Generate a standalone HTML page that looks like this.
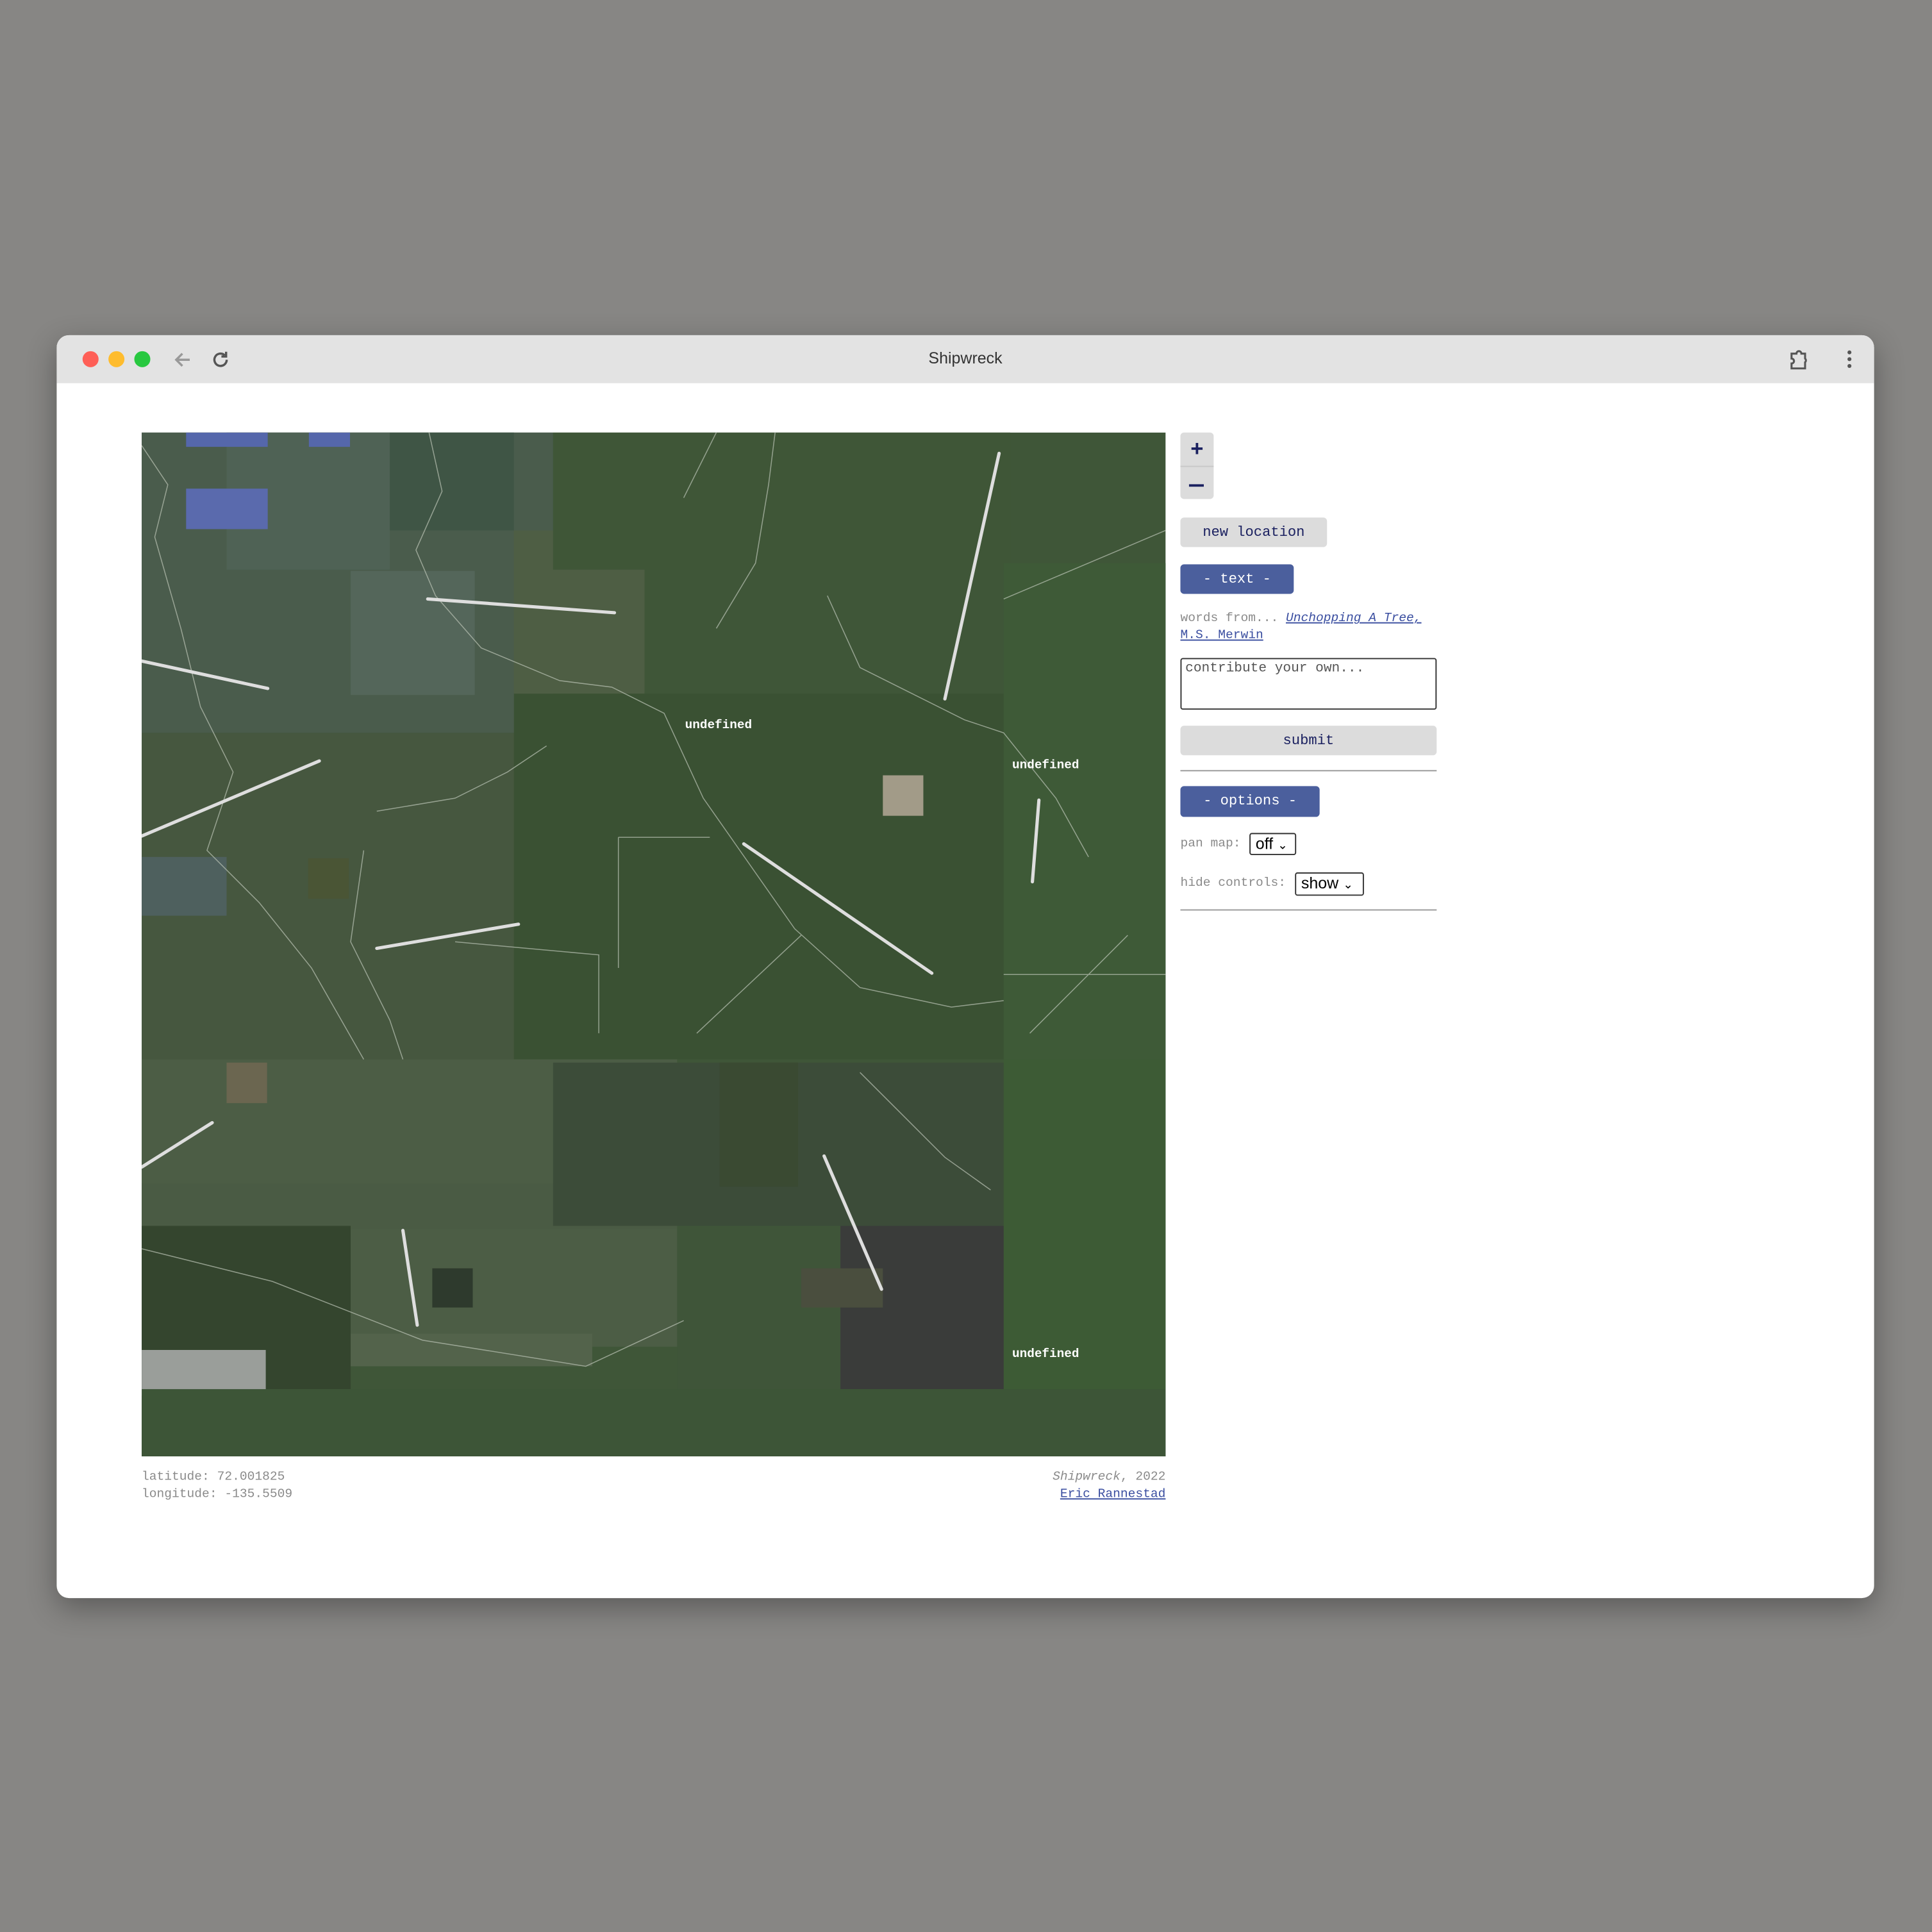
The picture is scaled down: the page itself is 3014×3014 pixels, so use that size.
<!DOCTYPE html>
<html><head><meta charset="utf-8"><style>
html,body{margin:0;padding:0;}
body{width:3014px;height:3014px;background:#878684;overflow:hidden;position:relative;}
#w{position:absolute;left:0;top:0;width:1568px;height:1568px;transform:scale(1.92219);transform-origin:0 0;font-family:"Liberation Mono",monospace;}
.win{position:absolute;left:46px;top:272px;width:1475px;height:1025px;background:#fff;border-radius:10px;overflow:hidden;box-shadow:0 8px 24px rgba(0,0,0,.32);}
.bar{position:absolute;left:0;top:0;width:100%;height:39px;background:#e3e3e3;}
.dot{position:absolute;top:13px;width:13px;height:13px;border-radius:50%;}
.title{position:absolute;left:0;width:100%;top:11px;text-align:center;font:13px "Liberation Sans",sans-serif;color:#333;}
.abs{position:absolute;}
.btn{position:absolute;left:912px;background:#dcdcdc;border-radius:3px;color:#1b2160;font-size:11.5px;text-align:center;}
.blue{background:#4b5f9d;color:#fff;}
.gray{color:#8a8a8a;font-size:10.2px;}
a{color:#3a4ea0;}
.sel{position:absolute;border:1px solid #333;border-radius:2px;font:13px "Liberation Sans",sans-serif;color:#000;background:#fff;box-sizing:border-box;padding-left:4px;line-height:16px;}
</style></head><body><div id="w">
<div class="win">
 <div class="bar">
  <div class="dot" style="left:21px;background:#fe5f57;"></div>
  <div class="dot" style="left:42px;background:#febc2e;"></div>
  <div class="dot" style="left:63px;background:#28c840;"></div>
  <svg class="abs" style="left:94px;top:12px" width="16" height="16" viewBox="0 0 16 16"><path d="M14 8H3M8 3L3 8l5 5" stroke="#999" stroke-width="1.8" fill="none"/></svg>
  <svg class="abs" style="left:125px;top:12px" width="16" height="16" viewBox="0 0 16 16"><path d="M13 8a5 5 0 1 1-1.6-3.7" stroke="#555" stroke-width="1.8" fill="none"/><path d="M12.5 1.5v3.8H8.7" stroke="#555" stroke-width="1.8" fill="none"/></svg>
  <div class="title">Shipwreck</div>
  <svg class="abs" style="left:1405px;top:11px" width="18" height="18" viewBox="0 0 18 18"><path d="M3 4h4a2 2 0 0 1 4 0h3v4a2 2 0 0 1 0 3v5H3v-4a2 2 0 0 0 0-4z" stroke="#555" stroke-width="1.6" fill="none"/></svg>
  <svg class="abs" style="left:1450px;top:11px" width="10" height="18" viewBox="0 0 10 18"><circle cx="5" cy="3" r="1.6" fill="#555"/><circle cx="5" cy="8.5" r="1.6" fill="#555"/><circle cx="5" cy="14" r="1.6" fill="#555"/></svg>
 </div>
 <svg class="abs" style="left:69px;top:79px" width="831" height="831" viewBox="0 0 1568 1568">
  <rect width="1568" height="1568" fill="#3f5638"/>
  <rect x="0" y="0" width="630" height="460" fill="#4a5c4c"/>
  <rect x="130" y="0" width="250" height="210" fill="#4f6255"/>
  <rect x="320" y="212" width="190" height="190" fill="#54665a"/>
  <rect x="380" y="0" width="190" height="150" fill="#3f5545"/>
  <rect x="570" y="150" width="200" height="250" fill="#4e5e44"/>
  <rect x="630" y="0" width="700" height="210" fill="#3f5637"/>
  <rect x="0" y="460" width="570" height="500" fill="#46573f"/>
  <rect x="0" y="650" width="130" height="90" fill="#4e605e"/>
  <rect x="570" y="400" width="760" height="560" fill="#3a5133"/>
  <rect x="1320" y="200" width="248" height="760" fill="#3e5a37"/>
  <rect x="0" y="960" width="820" height="440" fill="#4c5d45"/>
  <rect x="0" y="1150" width="820" height="70" fill="#4a5b44"/>
  <rect x="630" y="965" width="690" height="250" fill="#3c4c39"/>
  <rect x="885" y="965" width="120" height="190" fill="#3a4a32"/>
  <rect x="1320" y="960" width="248" height="505" fill="#3d5b35"/>
  <rect x="820" y="1215" width="250" height="250" fill="#3f5539"/>
  <rect x="1070" y="1215" width="250" height="250" fill="#3a3c3a"/>
  <rect x="1010" y="1280" width="125" height="60" fill="#4a4e3e"/>
  <rect x="0" y="1215" width="320" height="353" fill="#34452e"/>
  <rect x="0" y="1405" width="190" height="70" fill="#9a9e9a"/>
  <rect x="0" y="1465" width="1568" height="103" fill="#3d5537"/>
  <rect x="320" y="1380" width="370" height="50" fill="#53634b"/>
  <rect x="1135" y="525" width="62" height="62" fill="#a29b88"/>
  <rect x="130" y="965" width="62" height="62" fill="#6b6650"/>
  <rect x="255" y="652" width="62" height="62" fill="#4a5535"/>
  <rect x="445" y="1280" width="62" height="60" fill="#2e3a2d"/>
  <rect x="68" y="0" width="125" height="22" fill="#5567ab"/>
  <rect x="256" y="0" width="63" height="22" fill="#5567ab"/>
  <rect x="68" y="86" width="125" height="62" fill="#5a6aad"/>
  <g stroke="#b9c2b4" stroke-width="1.5" fill="none" opacity=".7">
   <path d="M0 20 L40 80 L20 160 L60 300 L90 420 L140 520 L100 640 L180 720 L260 820 L340 960"/>
   <path d="M440 0 L460 90 L420 180 L450 250 L520 330 L640 380 L720 390 L800 430 L860 560 L930 660 L1000 760 L1100 850 L1240 880 L1320 870"/>
   <path d="M970 0 L960 80 L940 200 L880 300"/>
   <path d="M880 0 L830 100"/>
   <path d="M1050 250 L1100 360 L1180 400 L1260 440 L1320 460 L1400 560 L1450 650"/>
   <path d="M360 580 L480 560 L560 520 L620 480"/>
   <path d="M340 640 L320 780 L380 900 L400 960"/>
   <path d="M480 780 L700 800 L700 920"/>
   <path d="M730 620 L870 620 M730 620 L730 820"/>
   <path d="M850 920 L1010 770"/>
   <path d="M1360 920 L1510 770 M1320 830 L1568 830"/>
   <path d="M1100 980 L1230 1110 L1300 1160"/>
   <path d="M0 1250 L200 1300 L430 1390 L680 1430 L830 1360"/>
   <path d="M1320 255 L1568 150"/>
  </g>
  <g stroke="#dedede" stroke-width="5" stroke-linecap="round">
   <path d="M438 255 L724 276"/><path d="M1313 32 L1230 408"/><path d="M0 350 L193 392"/>
   <path d="M272 503 L0 618"/><path d="M360 790 L577 753"/><path d="M922 630 L1210 828"/>
   <path d="M1374 563 L1364 688"/><path d="M108 1057 L0 1125"/><path d="M400 1222 L422 1367"/>
   <path d="M1045 1108 L1133 1312"/>
  </g>
  <g fill="#fff" font-family="Liberation Mono, monospace" font-size="19" font-weight="bold">
   <text x="832" y="453">undefined</text><text x="1333" y="514">undefined</text><text x="1333" y="1416">undefined</text>
  </g>
 </svg>
 <div class="abs" style="left:912px;top:79px;width:27px;height:54px;background:#dcdcdc;border-radius:3px;"></div>
 <div class="abs" style="left:912px;top:106px;width:27px;height:1px;background:#c8c8c8;"></div>
 <div class="abs" style="left:912px;top:82px;width:27px;text-align:center;font:bold 18px 'Liberation Sans',sans-serif;color:#1b2160;">+</div>
 <div class="abs" style="left:919px;top:121px;width:12px;height:2px;background:#1b2160;"></div>
 <div class="btn" style="top:148px;width:119px;height:24px;line-height:25px;">new location</div>
 <div class="btn blue" style="top:186px;width:92px;height:24px;line-height:25px;">- text -</div>
 <div class="abs gray" style="left:912px;top:224px;line-height:14px;width:220px;">words from... <a href="#"><i>Unchopping A Tree,</i></a><br><a href="#">M.S. Merwin</a></div>
 <div class="abs" style="left:912px;top:262px;width:208px;height:42px;border:1px solid #333;border-radius:2px;font-size:11px;color:#555;padding:2px 3px;box-sizing:border-box;">contribute your own...</div>
 <div class="btn" style="top:317px;width:208px;height:24px;line-height:25px;">submit</div>
 <div class="abs" style="left:912px;top:353px;width:208px;height:1px;background:#999;"></div>
 <div class="btn blue" style="top:366px;width:113px;height:25px;line-height:26px;">- options -</div>
 <div class="abs gray" style="left:912px;top:408px;">pan map:</div>
 <div class="sel" style="left:968px;top:404px;width:38px;height:18px;">off <span style="font-size:10px">&#8964;</span></div>
 <div class="abs gray" style="left:912px;top:440px;">hide controls:</div>
 <div class="sel" style="left:1005px;top:436px;width:56px;height:19px;">show <span style="font-size:10px">&#8964;</span></div>
 <div class="abs" style="left:912px;top:466px;width:208px;height:1px;background:#999;"></div>
 <div class="abs gray" style="left:69px;top:921px;line-height:14px;">latitude: 72.001825<br>longitude: -135.5509</div>
 <div class="abs gray" style="left:600px;width:300px;top:921px;line-height:14px;text-align:right;"><i>Shipwreck</i>, 2022<br><a href="#">Eric Rannestad</a></div>
</div>
</div></body></html>
